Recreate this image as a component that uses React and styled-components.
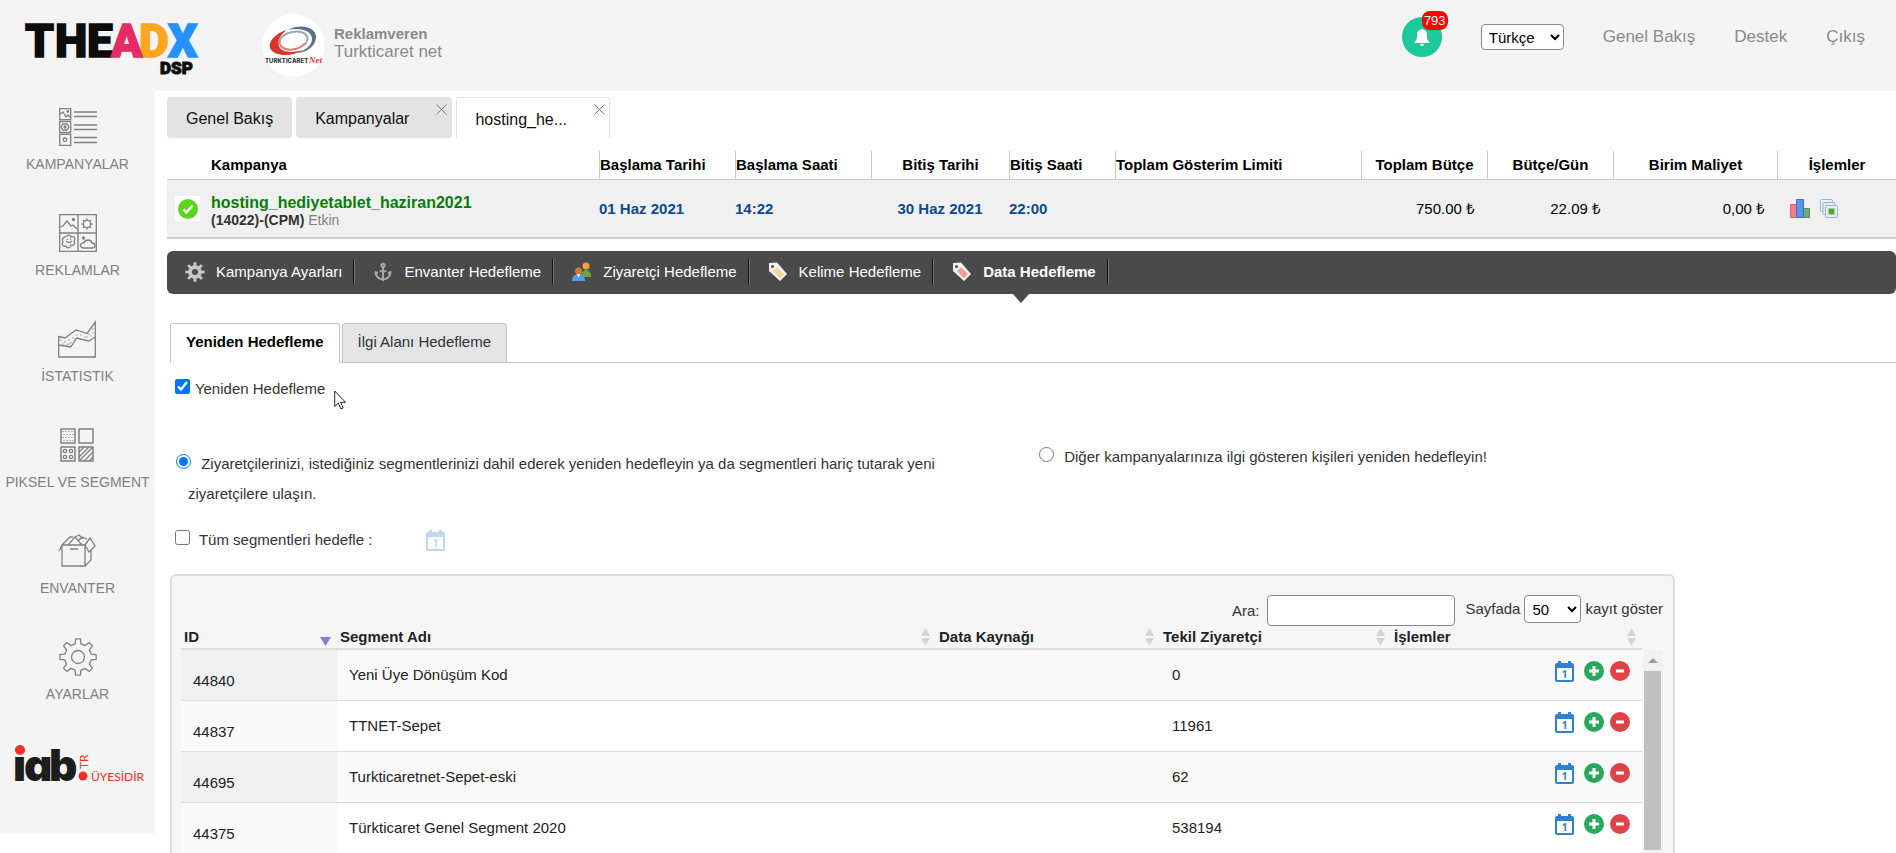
import React, { useState } from 'react';
import styled, { createGlobalStyle, css } from 'styled-components';
import { Anchor } from 'lucide-react';

const GlobalStyle = createGlobalStyle`
  *, *::before, *::after {
    box-sizing: border-box;
  }
  body {
    margin: 0;
    background: #fff;
    color: #333;
    font: 15px/20px "Liberation Sans", Arial, sans-serif;
  }
  button, input, select {
    font: inherit;
    margin: 0;
  }
  a {
    color: inherit;
    text-decoration: none;
  }
  svg {
    display: block;
    flex: none;
    overflow: visible;
  }
`;

const Page = styled.div`
  height: 100vh;
  overflow: hidden;
`;

/* ---------- header ---------- */

const Header = styled.header`
  display: flex;
  align-items: center;
  height: 91px;
  padding: 0 31px 0 25px;
  background: #f4f4f4;
`;

const Advertiser = styled.div`
  display: flex;
  align-items: center;
  gap: 9px;
  margin-left: 61px;
  color: #8a8a8a;
  font-size: 17px;
  line-height: 18px;

  strong {
    display: block;
    font-size: 15px;
  }
  div {
    padding-bottom: 5px;
  }
`;

const TopNav = styled.nav`
  display: flex;
  align-items: center;
  align-self: flex-start;
  gap: 39px;
  height: 40px;
  margin: 17px 0 0 auto;
  color: #8a8a8a;
  font-size: 17px;
`;

const BellButton = styled.button`
  position: relative;
  display: flex;
  align-items: center;
  justify-content: center;
  width: 40px;
  height: 40px;
  padding: 0;
  border: 0;
  border-radius: 50%;
  background: #1bc99c;
`;

const Badge = styled.span`
  position: absolute;
  top: -6px;
  right: -6px;
  width: 26px;
  border-radius: 8px;
  background: #f00;
  color: #fff;
  font-size: 13px;
  line-height: 19px;
  text-align: center;
`;

const Select = styled.select`
  width: ${({ $width }) => $width}px;
  height: ${({ $height }) => $height}px;
  padding: 0 3px;
  border: 1px solid #8a8a8a;
  border-radius: 4px;
  background: #fff;
  color: #000;
  font-size: 15px;
`;

/* ---------- sidebar ---------- */

const Body = styled.div`
  display: flex;
  align-items: flex-start;
`;

const Sidebar = styled.aside`
  display: flex;
  flex: none;
  flex-direction: column;
  align-items: center;
  gap: 40px;
  width: 155px;
  padding: 17px 0 50px;
  background: #f4f4f4;
`;

const SideLink = styled.a`
  display: flex;
  flex-direction: column;
  align-items: center;
  gap: 8px;
  color: #808080;
  font-size: 14px;
  white-space: nowrap;
`;

const Main = styled.main`
  flex: 1;
  min-width: 0;
  padding: 6px 0 0 12px;
`;

/* ---------- page tabs ---------- */

const PageTabs = styled.nav`
  display: flex;
  gap: 4px;
`;

const PageTab = styled.div`
  display: flex;
  align-items: center;
  height: 41px;
  border: 1px solid #e3e3e3;
  border-radius: 3px;
  background: #e3e3e3;
  color: #111;
  font-size: 16px;

  ${({ $active }) => $active && css`
    border-bottom: 0;
    border-radius: 3px 3px 0 0;
    background: #fff;
  `}

  a {
    padding: 3px 18px 0;
  }
`;

const CloseButton = styled.button`
  align-self: flex-start;
  margin: 6px 4px 0 9px;
  padding: 0;
  border: 0;
  background: none;
`;

/* ---------- campaign summary ---------- */

const CampaignTable = styled.table`
  width: 100%;
  margin-top: 13px;
  border-spacing: 0;
  table-layout: fixed;
  color: #000;

  th {
    height: 29px;
    padding: 0;
    border-bottom: 1px solid #ccc;
    border-left: 1px solid #ccc;
    white-space: nowrap;
  }
  th:nth-child(-n + 2) {
    border-left: 0;
  }
  td {
    height: 59px;
    padding: 0;
    border-bottom: 2px solid #ccc;
    background: #f0f0f0;
  }
`;

const HeadCell = styled.th`
  text-align: ${({ $align }) => $align || 'left'};
`;

const Status = styled.div`
  display: flex;
  align-items: center;
  justify-content: center;
  width: 25px;
  height: 25px;
  margin-left: 8px;
  background: #fff;
`;

const Campaign = styled.div`
  padding-top: 5px;
  color: #333;
  font-size: 14px;
  line-height: 16px;

  a {
    display: block;
    color: #087d08;
    font-size: 16px;
    font-weight: bold;
    line-height: 18px;
  }
  span {
    color: #808080;
  }
`;

const DateText = styled.div`
  color: #0d4a8c;
  font-weight: bold;
  text-align: ${({ $align }) => $align || 'left'};
`;

const Money = styled.div`
  padding-right: 12px;
  text-align: right;
`;

const RowTools = styled.div`
  display: flex;
  gap: 10px;
  padding-left: 13px;
`;

const IconButton = styled.button`
  display: block;
  padding: 0;
  border: 0;
  background: none;
`;

/* ---------- targeting bar ---------- */

const TargetBar = styled.nav`
  display: flex;
  height: 43px;
  margin-top: 12px;
  border-radius: 6px;
  background: #4a4a4a;
  color: #fff;
`;

const TargetLink = styled.a`
  position: relative;
  display: flex;
  align-items: center;
  gap: 11px;
  padding: 0 0 2px 18px;
  font-weight: ${({ $active }) => ($active ? 'bold' : 'normal')};
  white-space: nowrap;

  &::after {
    content: '';
    width: 2px;
    height: 25px;
    border-left: 1px solid #111;
    background: #777;
  }

  ${({ $active }) => $active && css`
    &::before {
      content: '';
      position: absolute;
      top: 100%;
      left: 50%;
      margin-left: -8px;
      border: 8px solid transparent;
      border-top: 9px solid #4a4a4a;
      border-bottom: 0;
    }
  `}
`;

/* ---------- sub tabs and options ---------- */

const SubTabs = styled.div`
  display: flex;
  gap: 2px;
  margin: 29px 0 0 3px;
  box-shadow: inset 0 -1px #c4c4c4;
`;

const SubTab = styled.button`
  height: 40px;
  padding: 0 15px 2px;
  border: 1px solid #c4c4c4;
  border-bottom-color: ${({ $active }) => ($active ? '#fff' : '#c4c4c4')};
  border-radius: 3px 3px 0 0;
  background: ${({ $active }) => ($active ? '#fff' : '#e4e4e4')};
  color: ${({ $active }) => ($active ? '#000' : '#333')};
  font-weight: ${({ $active }) => ($active ? 'bold' : 'normal')};
`;

const Options = styled.section`
  padding: 16px 0 0 3px;
`;

const Line = styled.div`
  display: flex;
  align-items: center;
  height: 20px;
  padding-left: 5px;
`;

const Tick = styled.input`
  width: 15px;
  height: 15px;
  margin-right: ${({ $gap }) => $gap}px;
`;

const Cursor = styled.svg`
  position: absolute;
  top: 390px;
  left: 334px;
`;

const Choices = styled.div`
  display: grid;
  grid-template-columns: 1fr 1fr;
  margin: 43px 0 21px;
  line-height: 30px;
`;

const Choice = styled.label`
  padding: ${({ $top }) => $top || 0}px 60px 0 18px;
  text-indent: -12px;
`;

const AllDates = styled(IconButton)`
  margin-left: 54px;
  opacity: 0.3;
`;

/* ---------- segment list ---------- */

const Panel = styled.section`
  margin: 24px 221px 0 3px;
  padding: 19px 10px 20px 9px;
  border: 2px solid #ddd;
  border-radius: 6px;
  background: #f6f6f6;
`;

const Toolbar = styled.div`
  display: flex;
  align-items: flex-start;
  justify-content: flex-end;
  gap: 10px;
`;

const Field = styled.label`
  display: flex;
  align-items: center;
  gap: ${({ $gap }) => $gap}px;
`;

const SearchInput = styled.input`
  width: 188px;
  height: 31px;
  border: 1px solid #8a8a8a;
  border-radius: 4px;
  background: #fff;
`;

const Scroller = styled.div`
  display: flex;
  gap: 2px;
`;

const SegmentTable = styled.table`
  flex: 1;
  min-width: 0;
  border-spacing: 0;
  table-layout: fixed;
  color: #222;

  th {
    height: 24px;
    padding: 0 6px 0 3px;
    border-bottom: 2px solid #ddd;
    text-align: left;
  }
  td {
    height: 51px;
    padding: 0 12px;
    border-bottom: 1px solid #ddd;
    background: #fff;
  }
  td:first-child {
    padding-top: 12px;
    background: #fafafa;
  }
  tr:nth-child(odd) td {
    background: #f9f9f9;
  }
  tr:nth-child(odd) td:first-child {
    background: #f0f0f0;
  }
`;

const SortHead = styled.div`
  display: flex;
  align-items: center;
  justify-content: space-between;
`;

const Actions = styled.div`
  display: flex;
  align-items: center;
  justify-content: flex-end;
  gap: 6px;
  padding-bottom: 8px;
`;

const DateButton = styled(IconButton)`
  margin-right: 4px;
`;

const Track = styled.div`
  display: flex;
  flex-direction: column;
  width: 19px;
  margin-top: 24px;
  padding: 0 2px 4px 0;
  background: #f1f1f1;
`;

const ArrowUp = styled.div`
  display: flex;
  align-items: center;
  justify-content: center;
  height: 21px;
`;

const Thumb = styled.div`
  flex: 1;
  background: #c1c1c1;
`;

/* ---------- drawings ---------- */

function gearPath(c, outer, inner, teeth) {
  const step = (Math.PI * 2) / teeth;
  const pts = [];
  for (let i = 0; i < teeth; i += 1) {
    const a = i * step - Math.PI / 2;
    [[-0.28, inner], [-0.17, outer], [0.17, outer], [0.28, inner]].forEach(([k, r]) => {
      pts.push(`${(c + r * Math.cos(a + k * step)).toFixed(2)} ${(c + r * Math.sin(a + k * step)).toFixed(2)}`);
    });
  }
  return `M${pts.join('L')}Z`;
}

const Logo = () => (
  <svg width="176" height="60" viewBox="0 0 176 60" role="img" aria-label="TheADX DSP">
    <g fontFamily="Roboto, sans-serif" fontWeight="900" fontSize="46" strokeWidth="1.500">
      <text x="0" y="41" fill="#0c0c0c" stroke="#0c0c0c">T</text>
      <text x="30" y="41" fill="#0c0c0c" stroke="#0c0c0c">H</text>
      <text x="62" y="41" fill="#0c0c0c" stroke="#0c0c0c">E</text>
      <text x="114" y="41" fill="#ffa51e" stroke="#ffa51e">D</text>
      <text x="86" y="41" fill="#e52a65" stroke="#e52a65">A</text>
      <text x="143" y="41" fill="#2492ff" stroke="#2492ff">X</text>
      <text x="135" y="58" fill="#0c0c0c" stroke="#0c0c0c" strokeWidth="1" fontSize="17">DSP</text>
    </g>
  </svg>
);

const AdvertiserLogo = () => (
  <svg width="63" height="63" viewBox="0 0 63 63">
    <circle cx="31.500" cy="31.500" r="31.500" fill="#fff" />
    <path d="M26 16C38 9 55 13 54 24c-1 9-11 15-19 15 9-3 15-8 15-14 0-9-13-12-24-9z" fill="#5d7186" />
    <path d="M25 16C14 19 6 27 8 34c3 8 21 10 33 2-10 3-22 3-24-4-2-6 2-12 8-16z" fill="#d8352f" />
    <path d="M17 28c2-8 14-12 22-10 7 2 9 8 3 13" fill="none" stroke="#9aa8b5" strokeWidth="2" />
    <path d="M18 26c-2 8 7 11 15 9 5-1 8-3 10-6" fill="none" stroke="#e27a70" strokeWidth="2" />
    <text x="3" y="49" fontFamily="Inter, sans-serif" fontSize="6" fontWeight="800" fill="#333">TURKTICARET</text>
    <text x="47" y="49" fontFamily="Liberation Serif, serif" fontSize="9" fontStyle="italic" fontWeight="bold" fill="#d8352f">Net</text>
  </svg>
);

const Bell = () => (
  <svg width="16" height="18" viewBox="0 0 16 18" fill="#fff">
    <path d="M7 1.500a1 1 0 0 1 2 0C12 2 13 4 13 7c0 4 .5 5.500 2.500 7v1H.5v-1C2.500 12.500 3 11 3 7c0-3 1-5 4-5.500z" />
    <path d="M6 16h4a2 2 0 0 1-4 0z" />
  </svg>
);

const CloseIcon = () => (
  <svg width="11" height="11" viewBox="0 0 11 11" stroke="#777" strokeWidth="1">
    <path d="M0.500 0.500l10 10M10.500 0.500l-10 10" />
  </svg>
);

const SideIcon = ({ children }) => (
  <svg width="38" height="38" viewBox="0 0 38 38" fill="none" stroke="#808080" strokeWidth="1.300">{children}</svg>
);

const CampaignsIcon = () => (
  <SideIcon>
    <path d="M.7.7h11v11H.7zM.7 13.500h11v11H.7zM.7 26.300h11v11H.7z" />
    <path d="M1 6l3-2 3 5 2-2 3 3" />
    <circle cx="8.800" cy="3.500" r=".8" />
    <path d="M4 16h4l2 3-2 3H4l-2-3z" />
    <circle cx="6" cy="19" r="1" />
    <circle cx="6" cy="31.800" r="1.800" />
    <path d="M15 4h23M15 8.500h23M15 17h23M15 21.500h23M15 29.500h23M15 34.500h23" />
  </SideIcon>
);

const AdsIcon = () => (
  <SideIcon>
    <path d="M.7.7h36.600v36.600H.7zM19 .7v36.600M.7 19h36.600" />
    <path d="M1 13l3-1 4-5 4 5 2-1 4 4" />
    <circle cx="14.500" cy="5.500" r="1" fill="#808080" />
    <circle cx="28" cy="10" r="3.700" />
    <path d="M28 4.500v2M28 13.500v2M22.500 10h2M31.500 10h2M24 6l1.500 1.500M30.500 12.500L32 14M24 14l1.500-1.500M30.500 7.500L32 6" />
    <path d="M8 22c2-2 4 0 4 1 3-1 5 1 3 4 2 3-1 5-3 4 0 3-4 4-5 1-3 1-5-2-3-4-2-3 1-5 4-6z" />
    <path d="M7 27c2 2 4 2 6 0M8.500 25v1M11.500 25v1" />
    <path d="M24 34c-4-1-3-6 1-5 1-4 7-4 8 0 4 0 4 5 0 5z" />
    <circle cx="24.500" cy="24" r="1" fill="#808080" />
  </SideIcon>
);

const dots = [[3, 20], [7, 22], [11, 20], [15, 18], [19, 15], [23, 15], [27, 17], [31, 14], [35, 9], [5, 24], [9, 25], [13, 23], [17, 19], [29, 17], [33, 16], [35, 13], [11, 24]];

const StatsIcon = () => (
  <SideIcon>
    <path d="M.7 16.500L7 18l11-8 11 3.500L37.300 2v35H.7z" />
    <path d="M.7 25l12 2 6-9 12 3 6.600-4" />
    {dots.map(([x, y]) => <circle key={`${x}-${y}`} cx={x} cy={y} r=".3" strokeWidth=".8" />)}
  </SideIcon>
);

const grid = [0, 1, 2, 3, 4, 5, 6, 7, 8, 9, 10, 11, 12, 13, 14, 15];

const PixelIcon = () => (
  <SideIcon>
    <path d="M3 3h14v14H3zM21 3h14v14H21zM3 21h14v14H3zM21 21h14v14H21z" strokeLinejoin="round" strokeWidth="1.500" />
    {grid.map((n) => <circle key={n} cx={5 + (n % 4) * 3 + (Math.floor(n / 4) % 2)} cy={5.500 + Math.floor(n / 4) * 3} r=".3" strokeWidth=".8" />)}
    <circle cx="7" cy="25" r="1.700" />
    <circle cx="13" cy="25" r="1.700" />
    <circle cx="7" cy="31" r="1.700" />
    <circle cx="13" cy="31" r="1.700" />
    <path d="M21 26l5-5M21 31l10-10M22 34l13-13M26 35l9-9M31 35l4-4" />
  </SideIcon>
);

const InventoryIcon = () => (
  <SideIcon>
    <path d="M4 13h23v21H4zM27 34l6-6V18M27 13v21M4 13l-3 6M4 13l8-8h3M10 13l7-8 7 8M17 5l4-2 4 4M20 9l4-4 5 2M27 13l5-7 5 8-6 6zM12 17h8" />
  </SideIcon>
);

const SettingsIcon = () => (
  <SideIcon>
    <path d={gearPath(19, 18.300, 13.500, 8)} strokeLinejoin="round" />
    <circle cx="19" cy="19" r="6.500" />
  </SideIcon>
);

const IabLogo = () => (
  <svg width="126" height="39" viewBox="0 0 126 39" role="img" aria-label="iab TR üyesidir">
    <g fontFamily="Inter, sans-serif" fontWeight="900" fontSize="44" fill="#1d1d1b" style={{ fontFeatureSettings: '"cv11"' }}>
      <text x="-2" y="37">ı</text>
      <text x="9" y="37">a</text>
      <text x="34" y="37">b</text>
    </g>
    <circle cx="5" cy="6" r="5" fill="#ee3126" />
    <circle cx="68" cy="32" r="4.500" fill="#ee3126" />
    <g fontFamily="Lato, sans-serif" fill="#ee3126">
      <text transform="translate(73 25) rotate(-90)" fontSize="12">TR</text>
      <text x="76" y="37" fontSize="12">ÜYESİDİR</text>
    </g>
  </svg>
);

const CheckIcon = () => (
  <svg width="20" height="20" viewBox="0 0 20 20">
    <circle cx="10" cy="10" r="10" fill="#5bd71b" />
    <path d="M5.500 10.500l3 3 6-7" fill="none" stroke="#fff" strokeWidth="2.500" />
  </svg>
);

const ChartIcon = () => (
  <svg width="20" height="19" viewBox="0 0 20 19">
    <path d="M.5 5.500h6v13h-6z" fill="#f07f86" stroke="#e0606a" />
    <path d="M13.500 9.500h6v9h-6z" fill="#6fb072" stroke="#4d9154" />
    <path d="M6.500.5h7v18h-7z" fill="#5b93e6" stroke="#3a6fcb" />
  </svg>
);

const CopyIcon = () => (
  <svg width="18" height="19" viewBox="0 0 18 19" fill="#e6eef7" stroke="#9ab5d3">
    <rect x=".5" y=".5" width="12" height="12" rx="1" />
    <rect x="3" y="3.500" width="12" height="12" rx="1" />
    <rect x="5.500" y="6.500" width="12" height="12" rx="1" />
    <path d="M8.500 9.500h6v6h-6z" fill="#55a630" stroke="#a8cf8c" />
  </svg>
);

const GearIcon = () => (
  <svg width="20" height="20" viewBox="0 0 20 20">
    <path fillRule="evenodd" fill="#c6c6c6" d={`${gearPath(10, 9.800, 6.800, 8)}M13 10a3 3 0 1 0-6 0 3 3 0 0 0 6 0z`} />
  </svg>
);

const AnchorIcon = () => <Anchor size={20} color="#a9a9a9" strokeWidth={2.400} />;

const PeopleIcon = () => (
  <svg width="20" height="20" viewBox="0 0 20 20">
    <circle cx="14" cy="4" r="3.500" fill="#f0a13c" />
    <path d="M9 15c0-5 2-7 5-7s5 2 5 7z" fill="#6aa544" />
    <circle cx="6.500" cy="9" r="3.500" fill="#c77a45" />
    <path d="M0 19c0-5 3-7 6.500-7s6.500 2 6.500 7z" fill="#5a9be6" />
    <path d="M5 12l1.500 4L8 12z" fill="#fff" />
  </svg>
);

const TagIcon = ({ color }) => (
  <svg width="20" height="20" viewBox="0 0 20 20">
    <path d="M1 1l8-.5L19 12l-7 7L1 9z" fill="#f4f4f2" />
    <path d="M9 5l7 7-4 4.500L5 9z" fill={color} />
    <circle cx="4.500" cy="4.500" r="1.500" fill="#4a4a4a" />
  </svg>
);

const CalendarIcon = () => (
  <svg width="19" height="21" viewBox="0 0 19 21">
    <path d="M2 2h1V0h3v2h7V0h3v2h1a2 2 0 0 1 2 2v15a2 2 0 0 1-2 2H2a2 2 0 0 1-2-2V4a2 2 0 0 1 2-2z" fill="#2f80d0" />
    <path d="M2 7h15v12H2z" fill="#fff" />
    <text x="9.500" y="17" textAnchor="middle" fontFamily="Open Sans, sans-serif" fontWeight="bold" fontSize="10" fill="#2f80d0">1</text>
  </svg>
);

const SignIcon = ({ color, plus }) => (
  <svg width="20" height="20" viewBox="0 0 20 20">
    <circle cx="10" cy="10" r="10" fill={color} />
    <path d={plus ? 'M5 10h10M10 5v10' : 'M6 10h8'} stroke="#fff" strokeWidth="3" />
  </svg>
);

const SortIcon = ({ sorted }) => (sorted ? (
  <svg width="11" height="18" viewBox="0 0 11 18">
    <path d="M0 9h11L5.500 18z" fill="#8080d0" />
  </svg>
) : (
  <svg width="9" height="18" viewBox="0 0 9 18" fill="#d4d4d4">
    <path d="M0 8h9L4.500 0zM0 10h9L4.500 18z" />
  </svg>
));

/* ---------- data ---------- */

const sideLinks = [
  ['KAMPANYALAR', CampaignsIcon],
  ['REKLAMLAR', AdsIcon],
  ['İSTATISTIK', StatsIcon],
  ['PIKSEL VE SEGMENT', PixelIcon],
  ['ENVANTER', InventoryIcon],
  ['AYARLAR', SettingsIcon],
];

const targetLinks = [
  ['Kampanya Ayarları', <GearIcon />],
  ['Envanter Hedefleme', <AnchorIcon />],
  ['Ziyaretçi Hedefleme', <PeopleIcon />],
  ['Kelime Hedefleme', <TagIcon color="#f3d89a" />],
  ['Data Hedefleme', <TagIcon color="#f29a9a" />],
];

const campaignHeads = [
  ['Başlama Tarihi'],
  ['Başlama Saati'],
  ['Bitiş Tarihi', 'center'],
  ['Bitiş Saati'],
  ['Toplam Gösterim Limiti'],
  ['Toplam Bütçe', 'center'],
  ['Bütçe/Gün', 'center'],
  ['Birim Maliyet', 'center'],
  ['İşlemler', 'center'],
];

const campaignCols = [44, 388, 136, 136, 138, 106, null, 126, 126, 164, 119];

const segmentHeads = [
  ['ID', 156],
  ['Segment Adı'],
  ['Data Kaynağı', 224],
  ['Tekil Ziyaretçi', 231],
  ['İşlemler', 251],
];

const segments = [
  ['44840', 'Yeni Üye Dönüşüm Kod', '0'],
  ['44837', 'TTNET-Sepet', '11961'],
  ['44695', 'Turkticaretnet-Sepet-eski', '62'],
  ['44375', 'Türkticaret Genel Segment 2020', '538194'],
];

function CampaignSummary() {
  return (
    <CampaignTable>
      <colgroup>
        {campaignCols.map((w, i) => <col key={i} width={w || undefined} />)}
      </colgroup>
      <thead>
        <tr>
          <HeadCell aria-label="Durum" />
          <HeadCell>Kampanya</HeadCell>
          {campaignHeads.map(([text, align]) => <HeadCell key={text} $align={align}>{text}</HeadCell>)}
        </tr>
      </thead>
      <tbody>
        <tr>
          <td><Status><CheckIcon /></Status></td>
          <td>
            <Campaign>
              <a href="#campaign">hosting_hediyetablet_haziran2021</a>
              <strong>(14022)-(CPM)</strong>
              {' '}
              <span>Etkin</span>
            </Campaign>
          </td>
          <td><DateText>01 Haz 2021</DateText></td>
          <td><DateText>14:22</DateText></td>
          <td><DateText $align="center">30 Haz 2021</DateText></td>
          <td><DateText>22:00</DateText></td>
          <td />
          <td><Money>750.00 ₺</Money></td>
          <td><Money>22.09 ₺</Money></td>
          <td><Money>0,00 ₺</Money></td>
          <td>
            <RowTools>
              <IconButton aria-label="Rapor"><ChartIcon /></IconButton>
              <IconButton aria-label="Kopyala"><CopyIcon /></IconButton>
            </RowTools>
          </td>
        </tr>
      </tbody>
    </CampaignTable>
  );
}

function SegmentPanel() {
  const [search, setSearch] = useState('');
  const rows = segments.filter(([, name]) => name.toLowerCase().includes(search.toLowerCase()));

  return (
    <Panel>
      <Toolbar>
        <Field $gap={8}>
          Ara:
          <SearchInput value={search} onChange={(e) => setSearch(e.target.value)} />
        </Field>
        <Field $gap={4}>
          Sayfada
          <Select $width={57} $height={28} defaultValue="50">
            <option>25</option>
            <option>50</option>
            <option>100</option>
          </Select>
          kayıt göster
        </Field>
      </Toolbar>
      <Scroller>
        <SegmentTable>
          <colgroup>
            {segmentHeads.map(([text, width]) => <col key={text} width={width} />)}
          </colgroup>
          <thead>
            <tr>
              {segmentHeads.map(([text], i) => (
                <th key={text}>
                  <SortHead>
                    {text}
                    <SortIcon sorted={i === 0} />
                  </SortHead>
                </th>
              ))}
            </tr>
          </thead>
          <tbody>
            {rows.map(([id, name, visitors]) => (
              <tr key={id}>
                <td>{id}</td>
                <td>{name}</td>
                <td />
                <td>{visitors}</td>
                <td>
                  <Actions>
                    <DateButton aria-label="Tarih"><CalendarIcon /></DateButton>
                    <IconButton aria-label="Dahil et"><SignIcon color="#27a85c" plus /></IconButton>
                    <IconButton aria-label="Hariç tut"><SignIcon color="#e04347" /></IconButton>
                  </Actions>
                </td>
              </tr>
            ))}
          </tbody>
        </SegmentTable>
        <Track>
          <ArrowUp>
            <svg width="10" height="5" viewBox="0 0 10 5"><path d="M0 5h10L5 0z" fill="#a0a0a0" /></svg>
          </ArrowUp>
          <Thumb />
        </Track>
      </Scroller>
    </Panel>
  );
}

export default function App() {
  const [retarget, setRetarget] = useState(true);
  const [mode, setMode] = useState('segments');

  return (
    <Page>
      <GlobalStyle />
      <Header>
        <a href="#home"><Logo /></a>
        <Advertiser>
          <AdvertiserLogo />
          <div>
            <strong>Reklamveren</strong>
            Turkticaret net
          </div>
        </Advertiser>
        <TopNav>
          <BellButton aria-label="Bildirimler">
            <Bell />
            <Badge>793</Badge>
          </BellButton>
          <Select $width={83} $height={26} aria-label="Dil">
            <option>Türkçe</option>
            <option>English</option>
          </Select>
          <a href="#overview">Genel Bakış</a>
          <a href="#support">Destek</a>
          <a href="#logout">Çıkış</a>
        </TopNav>
      </Header>
      <Body>
        <Sidebar>
          {sideLinks.map(([text, Icon]) => (
            <SideLink key={text} href="#menu">
              <Icon />
              {text}
            </SideLink>
          ))}
          <IabLogo />
        </Sidebar>
        <Main>
          <PageTabs>
            <PageTab><a href="#overview">Genel Bakış</a></PageTab>
            <PageTab>
              <a href="#campaigns">Kampanyalar</a>
              <CloseButton aria-label="Kapat"><CloseIcon /></CloseButton>
            </PageTab>
            <PageTab $active>
              <a href="#campaign">hosting_he...</a>
              <CloseButton aria-label="Kapat"><CloseIcon /></CloseButton>
            </PageTab>
          </PageTabs>
          <CampaignSummary />
          <TargetBar>
            {targetLinks.map(([text, icon], i) => (
              <TargetLink key={text} href="#target" $active={i === 4}>
                {icon}
                {text}
              </TargetLink>
            ))}
          </TargetBar>
          <SubTabs>
            <SubTab $active>Yeniden Hedefleme</SubTab>
            <SubTab>İlgi Alanı Hedefleme</SubTab>
          </SubTabs>
          <Options>
            <Line>
              <label>
                <Tick type="checkbox" $gap={1} checked={retarget} onChange={() => setRetarget(!retarget)} />
                {' Yeniden Hedefleme'}
              </label>
            </Line>
            <Choices>
              <Choice $top={7}>
                <Tick type="radio" name="mode" $gap={6} checked={mode === 'segments'} onChange={() => setMode('segments')} />
                {' Ziyaretçilerinizi, istediğiniz segmentlerinizi dahil ederek yeniden hedefleyin ya da segmentleri hariç tutarak yeni ziyaretçilere ulaşın.'}
              </Choice>
              <Choice>
                <Tick type="radio" name="mode" $gap={6} checked={mode === 'campaigns'} onChange={() => setMode('campaigns')} />
                {' Diğer kampanyalarınıza ilgi gösteren kişileri yeniden hedefleyin!'}
              </Choice>
            </Choices>
            <Line>
              <label>
                <Tick type="checkbox" $gap={5} />
                {' Tüm segmentleri hedefle :'}
              </label>
              <AllDates aria-label="Tarih"><CalendarIcon /></AllDates>
            </Line>
          </Options>
          <SegmentPanel />
        </Main>
      </Body>
      <Cursor width="13" height="20" viewBox="0 0 13 20">
        <path d="M.7 1v15.500l3.600-3.400 2.600 5.900 2.300-1-2.600-5.700h5z" fill="#fff" stroke="#222" />
      </Cursor>
    </Page>
  );
}
